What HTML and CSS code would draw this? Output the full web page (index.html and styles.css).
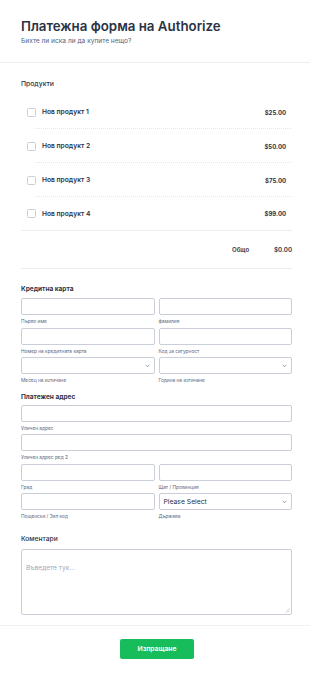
FILE: index.html
```html
<!DOCTYPE html>
<html lang="bg">
<head>
<meta charset="utf-8">
<title>Платежна форма на Authorize</title>
<link rel="stylesheet" href="styles.css">
</head>
<body>
<div class="form">
  <header class="header">
    <h1 class="title">Платежна форма на Authorize</h1>
    <p class="subtitle">Бихте ли иска ли да купите нещо?</p>
  </header>

  <section class="section products">
    <div class="sec-label">Продукти</div>
    <div class="plist">
      <div class="prow"><span class="cb"></span><span class="pname">Нов продукт 1</span><span class="price">$25.00</span></div>
      <div class="prow"><span class="cb"></span><span class="pname">Нов продукт 2</span><span class="price">$50.00</span></div>
      <div class="prow"><span class="cb"></span><span class="pname">Нов продукт 3</span><span class="price">$75.00</span></div>
      <div class="prow last"><span class="cb"></span><span class="pname">Нов продукт 4</span><span class="price">$99.00</span></div>
    </div>
    <div class="total"><span class="total-l">Общо</span><span class="total-v">$0.00</span></div>
  </section>

  <section class="section card">
    <div class="sec-head">Кредитна карта</div>
    <div class="grid2">
      <div class="field"><div class="input"></div><div class="sub">Първо име</div></div>
      <div class="field"><div class="input"></div><div class="sub">фамилия</div></div>
      <div class="field"><div class="input"></div><div class="sub">Номер на кредитната карта</div></div>
      <div class="field"><div class="input"></div><div class="sub">Код за сигурност</div></div>
      <div class="field"><div class="input select"><span></span><svg class="chev" viewBox="0 0 8 5"><path d="M1 1l3 3 3-3" fill="none" stroke="#6f7a90" stroke-width="1.2"/></svg></div><div class="sub">Месец на изтичане</div></div>
      <div class="field"><div class="input select"><span></span><svg class="chev" viewBox="0 0 8 5"><path d="M1 1l3 3 3-3" fill="none" stroke="#6f7a90" stroke-width="1.2"/></svg></div><div class="sub">Година на изтичане</div></div>
    </div>

    <div class="sec-head addr">Платежен адрес</div>
    <div class="grid2">
      <div class="field full"><div class="input"></div><div class="sub">Уличен адрес</div></div>
      <div class="field full"><div class="input"></div><div class="sub">Уличен адрес ред 2</div></div>
      <div class="field"><div class="input"></div><div class="sub">Град</div></div>
      <div class="field"><div class="input"></div><div class="sub">Щат / Провинция</div></div>
      <div class="field"><div class="input"></div><div class="sub">Пощенски / Зип код</div></div>
      <div class="field"><div class="input select"><span class="ph">Please Select</span><svg class="chev" viewBox="0 0 8 5"><path d="M1 1l3 3 3-3" fill="none" stroke="#6f7a90" stroke-width="1.2"/></svg></div><div class="sub">Държава</div></div>
    </div>
  </section>

  <section class="section comments">
    <div class="sec-head">Коментари</div>
    <div class="textarea"><span class="placeholder">Въведете тук...</span><svg class="grip" viewBox="0 0 6 6"><path d="M5.5 1.5L1.5 5.5M5.5 3.5L3.5 5.5" stroke="#b5bccb" stroke-width="0.7"/></svg></div>
  </section>

  <footer class="footer">
    <button class="submit" type="button">Изпращане</button>
  </footer>
</div>
</body>
</html>
```

FILE: styles.css
```css
* { box-sizing: border-box; }
html, body { margin: 0; padding: 0; background: #fff; }
body {
  font-family: Inter, "Noto Sans", "DejaVu Sans", sans-serif;
  color: #2c3345;
  width: 310px;
}
.header {
  padding: 16px 21px 16px;
  border-bottom: 1px solid #eceef2;
}
.title {
  margin: 0;
  font-size: 13.3px;
  line-height: 20px;
  font-weight: 600;
  color: #2c3345;
}
.subtitle {
  margin: 0;
  font-size: 6.6px;
  line-height: 10px;
  color: #57647e;
}
.section { padding: 0 18px 0 21px; }
.products .sec-label {
  margin-top: 16px;
  font-size: 6.8px;
  line-height: 10px;
  font-weight: 500;
  color: #2c3345;
}
.plist {
  margin-top: 6px;
  border-bottom: 1px solid #eceef2;
}
.prow {
  height: 34px;
  display: flex;
  align-items: center;
  padding: 0 6px;
  position: relative;
}
.prow::after {
  content: "";
  position: absolute;
  left: 14px;
  right: 0;
  bottom: 0;
  border-bottom: 1px dotted #e3e6ec;
}
.prow.last { height: 33px; }
.prow.last::after { display: none; }
.cb {
  width: 9px;
  height: 9px;
  border: 1px solid #c9ced9;
  border-radius: 1.5px;
  background: #fff;
  flex: none;
}
.pname {
  margin-left: 6px;
  font-size: 6.7px;
  font-weight: 600;
  color: #2c3345;
  flex: 1;
}
.price {
  font-size: 6px;
  font-weight: 700;
  color: #2c3345;
}
.total {
  height: 38px;
  display: flex;
  align-items: center;
  justify-content: flex-end;
  border-bottom: 1px solid #eceef2;
}
.total-l {
  font-size: 6px;
  font-weight: 600;
  color: #2c3345;
  margin-right: 25px;
}
.total-v {
  font-size: 6.2px;
  font-weight: 600;
  color: #2c3345;
}
.sec-head {
  font-size: 6.5px;
  line-height: 10px;
  font-weight: 700;
  color: #2c3345;
}
.card .sec-head { margin-top: 15px; margin-bottom: 4px; }
.card .sec-head.addr { margin-top: 5px; margin-bottom: 3px; }
.grid2 {
  display: grid;
  grid-template-columns: 1fr 1fr;
  column-gap: 4px;
}
.field { height: 29.5px; }
.field.full { grid-column: 1 / span 2; }
.input {
  height: 17px;
  border: 1px solid #c9ced9;
  border-radius: 2px;
  background: #fff;
}
.select {
  display: flex;
  align-items: center;
  justify-content: space-between;
  padding: 0 4px 0 4px;
}
.ph { font-size: 6.8px; color: #2c3345; }
.chev { width: 5px; height: 3.5px; }
.sub {
  margin-top: 2px;
  font-size: 4.8px;
  line-height: 8px;
  color: #57647e;
}
.comments .sec-head {
  margin-top: 11px;
  font-size: 6.7px;
  font-weight: 500;
}
.textarea {
  margin-top: 5px;
  height: 66px;
  border: 1px solid #c9ced9;
  border-radius: 2px;
  padding: 4px 4px;
  position: relative;
}
.placeholder { font-size: 6.6px; color: #a0a8ba; }
.grip { position: absolute; right: 1px; bottom: 1px; width: 6px; height: 6px; }
.footer {
  margin-top: 10px;
  border-top: 1px solid #f1f2f5;
  padding-top: 13px;
  display: flex;
  justify-content: center;
  padding-left: 4px;
}
.submit {
  width: 74px;
  height: 20px;
  border: none;
  border-radius: 2px;
  background: #18bd5b;
  color: #fff;
  font-family: inherit;
  font-size: 6.8px;
  font-weight: 600;
  padding: 0;
  cursor: pointer;
}
```
